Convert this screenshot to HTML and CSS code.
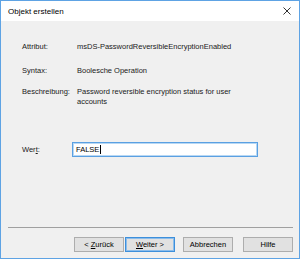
FILE: index.html
```html
<!DOCTYPE html>
<html lang="de">
<head>
<meta charset="utf-8">
<title>Objekt erstellen</title>
<link rel="stylesheet" href="styles.css">
</head>
<body>
<div class="window">
  <div class="titlebar">
    <span class="title">Objekt erstellen</span>
    <span class="close">
      <svg width="8" height="8" viewBox="0 0 8 8"><path d="M0.5 0.5 L7.5 7.5 M7.5 0.5 L0.5 7.5" stroke="#333" stroke-width="1" fill="none"/></svg>
    </span>
  </div>
  <div class="main">
    <div class="info">
      <div class="row r1"><span class="label">Attribut:</span><span class="value nowrap">msDS-PasswordReversibleEncryptionEnabled</span></div>
      <div class="row r2"><span class="label">Syntax:</span><span class="value">Boolesche Operation</span></div>
      <div class="row r3"><span class="label">Beschreibung:</span><span class="value">Password reversible encryption status for user accounts</span></div>
    </div>
    <div class="wert">
      <span class="wlabel">Wer<u>t</u>:</span>
      <div class="input"><span>FALSE</span><span class="caret"></span></div>
    </div>
    <div class="footer">
      <div class="sep"></div>
      <div class="buttons">
        <span class="btn"><span>&lt; <u>Z</u>urück</span></span>
        <span class="btn default"><span><u>W</u>eiter &gt;</span></span>
        <span class="btn cancel"><span>Abbrechen</span></span>
        <span class="btn help"><span>Hilfe</span></span>
      </div>
    </div>
  </div>
</div>
</body>
</html>
```
FILE: styles.css
```css
* { box-sizing: border-box; }
html, body { margin: 0; padding: 0; background: #f0f0f0; }
.window {
  width: 300px;
  height: 259px;
  border: 1px solid #5ea3e4;
  background: #f0f0f0;
  display: flex;
  flex-direction: column;
  font-family: "Liberation Sans", Arial, sans-serif;
  color: #1a1a1a;
}
.titlebar {
  height: 20px;
  background: #ffffff;
  display: flex;
  align-items: center;
  padding-left: 7px;
  padding-right: 6px;
}
.title { font-size: 8px; color: #000; }
.close { margin-left: auto; display: flex; width: 8px; height: 8px; margin-right: 2px; margin-top: -1px; }
.main {
  flex: 1;
  display: flex;
  flex-direction: column;
  padding-top: 21px;
}
.info { padding-left: 21px; font-size: 7.5px; line-height: 10px; }
.row { display: flex; }
.r2 { margin-top: 14px; }
.r3 { margin-top: 11px; }
.label { width: 55px; flex: none; }
.value { width: 162px; }
.nowrap { white-space: nowrap; }
.wert {
  display: flex;
  align-items: center;
  padding-left: 21px;
  margin-top: 35px;
  font-size: 7.5px;
}
.wlabel { width: 50px; flex: none; }
.input {
  width: 186px;
  height: 15px;
  background: #fff;
  border: 1px solid #5aa0e2;
  box-shadow: inset 0 0 0 1px #b8d8f4;
  padding-left: 3px;
  display: flex;
  align-items: center;
  color: #000;
}
.caret { display: inline-block; width: 1px; height: 9px; background: #000; margin-left: 1px; }
.footer { margin-top: auto; padding-bottom: 6px; }
.sep { height: 1px; background: #a0a0a0; margin: 0 6px 0 7px; }
.buttons {
  display: flex;
  justify-content: flex-end;
  padding-right: 6px;
  margin-top: 9px;
}
.btn {
  width: 50px;
  height: 15px;
  background: #e1e1e1;
  border: 1px solid #adadad;
  font-size: 7.5px;
  display: flex;
  align-items: center;
  justify-content: center;
  color: #000;
}
.btn.default { margin-left: 1px; border-color: #3d8fdb; box-shadow: inset 0 0 0 1px #8cbdeb; }
.btn.cancel { margin-left: 8px; }
.btn.help { margin-left: 10px; }
```
